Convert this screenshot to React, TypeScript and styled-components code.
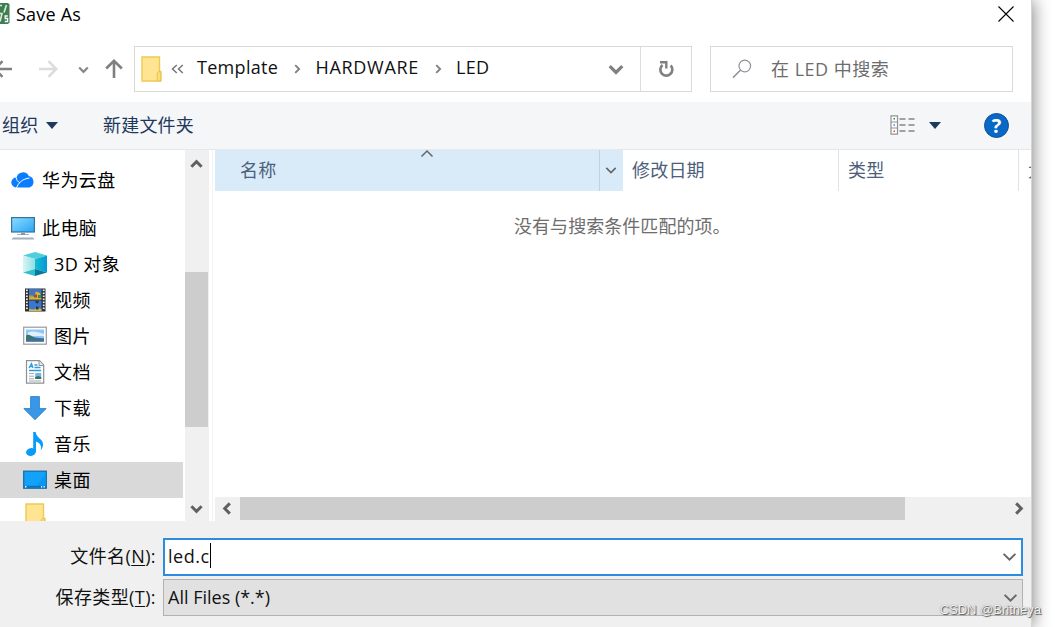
import React from "react";
import styled, { createGlobalStyle, css } from "styled-components";

type Direction = "up" | "down" | "left" | "right";

const rotation: Record<Direction, number> = { down: 0, left: 90, up: 180, right: 270 };

interface ChevronProps {
  dir?: Direction;
  size?: number;
  color?: string;
  weight?: number;
}

function Chevron({ dir = "down", size = 14, color = "#666", weight = 2 }: ChevronProps) {
  return (
    <svg width={size} height={size} viewBox="0 0 14 14">
      <path
        d="M1.5 4.5 7 10l5.5-5.5"
        fill="none"
        stroke={color}
        strokeWidth={weight}
        transform={`rotate(${rotation[dir]} 7 7)`}
      />
    </svg>
  );
}

function FolderIcon() {
  return (
    <svg width="21" height="26" viewBox="0 0 21 26">
      <path d="M1 1h17.5v14.5h1.3V25H1z" fill="#ffe491" stroke="#edc956" strokeWidth="1.4" />
      <path d="M16.2 24.5v-7.3l1.2-1.5h2.4V25h-3.6z" fill="#fbdc78" stroke="#e9c14a" strokeWidth="1" />
    </svg>
  );
}

function CloudIcon() {
  return (
    <svg width="24" height="24" viewBox="0 0 24 24">
      <path
        d="M5.5 19.5A5 5 0 0 1 2 10.8 5 5 0 0 1 5.6 9.5 6.5 6.5 0 0 1 17.8 8 6 6 0 0 1 18.5 19.5z"
        fill="#0a7cff"
      />
      <path d="M5.2 9.5c.2 2.500 1.500 4.300 3.600 5.200M5.500 20c2-5.500 6-9 13-10" fill="none" stroke="#fff" strokeWidth="1" />
    </svg>
  );
}

function ComputerIcon() {
  return (
    <svg width="24" height="24" viewBox="0 0 24 24">
      <defs>
        <linearGradient id="screen" x1="0" y1="0" x2="1" y2="1">
          <stop offset="0" stopColor="#8fdcff" />
          <stop offset="1" stopColor="#27a4f5" />
        </linearGradient>
      </defs>
      <rect x=".6" y="1.6" width="22.8" height="14.4" fill="url(#screen)" stroke="#35749f" strokeWidth="1.2" />
      <path d="M10 17h4v1.2h4V19H6v-.8h4z" fill="#8399ab" />
      <path d="M2 21.5h20l1.5 2H.5z" fill="#9fb0c0" />
    </svg>
  );
}

function CubeIcon() {
  return (
    <svg width="24" height="24" viewBox="0 0 24 24">
      <defs>
        <linearGradient id="cubeLeft" x1="0" y1="0" x2="1" y2="0">
          <stop offset="0" stopColor="#d8f6f4" />
          <stop offset="1" stopColor="#8fe0e4" />
        </linearGradient>
        <linearGradient id="cubeRight" x1="0" y1="0" x2="1" y2="0">
          <stop offset="0" stopColor="#19bcd4" />
          <stop offset="1" stopColor="#0598d6" />
        </linearGradient>
      </defs>
      <path d="M0 3.5 12 0l12 3.5-12 3.5z" fill="#4fcfdd" />
      <path d="M0 3.5 12 7v10L0 20.5z" fill="url(#cubeLeft)" />
      <path d="M24 3.5 12 7v10l12 3.5z" fill="url(#cubeRight)" />
      <path d="M0 20.5 12 17v7z" fill="#2cc0cd" />
      <path d="M12 17l12 3.5L12 24z" fill="#087a97" />
    </svg>
  );
}

function VideoIcon() {
  const holes = [1, 4, 7, 10, 13, 16, 19];
  return (
    <svg width="24" height="24" viewBox="0 0 24 24">
      <rect x="2" y=".5" width="20.5" height="23" fill="#2d2f33" />
      <rect x="6" y="1" width="12.5" height="10.5" fill="#3f73c7" />
      <rect x="6" y="12.5" width="12.5" height="10.5" fill="#3977d0" />
      <path d="M6 9.5l5-1 2-5 4 1.5 1.5 6.5H6z" fill="#d9b72d" />
      <path d="M6 7.5h4v2H6z" fill="#c0a03a" />
      <path d="M11 6.5h3v3h-3z" fill="#a64538" />
      <path d="M15 7h3v3h-3z" fill="#438b42" />
      <path d="M6 21l5 .5 3-1.5 4.5 1V23H6z" fill="#d1bc3d" />
      <path d="M12 13h4l-1 2.5-2-.5zM13 18.5h2.5v3H13z" fill="#3b3135" />
      {holes.map((y) => (
        <g key={y} fill="#ededed">
          <rect x="3" y={y + 0.5} width="1.8" height="1.6" />
          <rect x="19.8" y={y + 0.5} width="1.8" height="1.6" />
        </g>
      ))}
    </svg>
  );
}

function ImageIcon() {
  return (
    <svg width="24" height="24" viewBox="0 0 24 24">
      <rect x=".7" y="3.2" width="22.6" height="17" fill="#fff" stroke="#969ba0" strokeWidth="1.2" />
      <path d="M3 5.5h18v12H3z" fill="#8cc7f7" />
      <path d="M5 8.5c4-2 9-1 16 1.5v2H5z" fill="#dff0fb" />
      <path d="M3 11.5c3-2 5 1 9 2l9 1v3H3z" fill="#39776b" />
      <path d="M3 15.5c6-1.5 11-1 18-.8v2.8H3z" fill="#426e9b" />
    </svg>
  );
}

function DocumentIcon() {
  return (
    <svg width="24" height="24" viewBox="0 0 24 24">
      <path d="M3.5.7h13L20.7 5v18.2H3.5z" fill="#fff" stroke="#8d9195" strokeWidth="1.2" />
      <path d="M16 .8V5.5h4.7" fill="#e4e7e9" stroke="#8d9195" />
      <path d="M6 8 8.5 3.5 10 8M7 6.5h3M11.5 5h3M11.5 7.5h6M6 10.5h12" stroke="#2d9bd8" strokeWidth="1.3" fill="none" />
      <path d="M6 13.5h5M6 16.2h5M6 18.8h5M6 21h12" stroke="#a3a9ad" strokeWidth="1" />
      <path d="M12.2 13h6v6h-6z" fill="#76b7e9" />
      <path d="M12.2 17l3-1 3 1v2h-6z" fill="#317855" />
    </svg>
  );
}

function DownloadIcon() {
  return (
    <svg width="24" height="24" viewBox="0 0 24 24">
      <path d="M7.6.6h8.8v12h6.8L12 23.7.8 12.6h6.8z" fill="#3997e7" stroke="#2e83cc" strokeWidth=".9" />
    </svg>
  );
}

function MusicIcon() {
  return (
    <svg width="24" height="24" viewBox="0 0 24 24">
      <ellipse cx="8" cy="20" rx="5" ry="3.8" fill="#079bfa" transform="rotate(-15 8 20)" />
      <path
        d="M10.2 0h2.5c.5 4 3 5.2 5.5 8 3 3.5 2 7-.5 10.5 1-4.5-.2-7.5-4.7-9V20h-2.8z"
        fill="#079bfa"
      />
    </svg>
  );
}

function DesktopIcon() {
  return (
    <svg width="24" height="24" viewBox="0 0 24 24">
      <rect x=".7" y="3.2" width="22.6" height="17" fill="#12a1fb" stroke="#176fa8" strokeWidth="1.3" />
      <path d="M13 19 22.5 6v13z" fill="#0798f5" />
      <path d="M1.3 17.8h21.4v1.8H1.3z" fill="#0d73b6" />
      <path d="M2 18.8h1.4M18 18.8h1.2M20.5 18.8h1.2" stroke="#fff" strokeWidth="1.4" />
    </svg>
  );
}

function ArrowIcon({ dir, color }: { dir: Direction; color: string }) {
  // base glyph points left
  const angle = { left: 0, up: 90, right: 180, down: 270 }[dir];
  return (
    <svg width="20" height="20" viewBox="0 0 20 20">
      <path
        d="M19 10H2M9.5 2.2 1.8 10l7.7 7.8"
        fill="none"
        stroke={color}
        strokeWidth="2.6"
        transform={`rotate(${angle} 10 10)`}
      />
    </svg>
  );
}

const places = [
  { name: "华为云盘", level: 0, icon: <CloudIcon /> },
  { name: "此电脑", level: 0, icon: <ComputerIcon /> },
  { name: "3D 对象", level: 1, icon: <CubeIcon /> },
  { name: "视频", level: 1, icon: <VideoIcon /> },
  { name: "图片", level: 1, icon: <ImageIcon /> },
  { name: "文档", level: 1, icon: <DocumentIcon /> },
  { name: "下载", level: 1, icon: <DownloadIcon /> },
  { name: "音乐", level: 1, icon: <MusicIcon /> },
  { name: "桌面", level: 1, icon: <DesktopIcon />, selected: true },
  { name: "", level: 1, icon: <FolderIcon /> },
];

function App() {
  return (
    <Screen>
      <GlobalStyle />
      <Dialog>
        <TitleBar>
          <svg width="10" height="22" viewBox="0 0 10 22">
            <path d="M0 0h8l1.5 1.5v18L8 21H0z" fill="#3f7e50" />
            <path d="M0 2.5h2M6.5 2 4 9.5M0 10.5h2l-2 8" stroke="#dcebdc" strokeWidth="1.6" fill="none" />
            <path d="M7.8 13H5.2v2.5h2.4v3H4.8" stroke="#fff" strokeWidth="1.3" fill="none" />
          </svg>
          <Title>Save As</Title>
          <svg width="16" height="16" viewBox="0 0 16 16">
            <path d="M.5.5l15 15M15.5.5l-15 15" stroke="#000" strokeWidth="1.1" />
          </svg>
        </TitleBar>

        <NavRow>
          <NavButtons>
            <ArrowIcon dir="left" color="#808080" />
            <ArrowIcon dir="right" color="#dcdcdc" />
            <Chevron size={11} color="#888" weight={2.8} />
            <ArrowIcon dir="up" color="#808080" />
          </NavButtons>
          <AddressBar>
            <FolderIcon />
            <BackCrumbs width="13" height="10" viewBox="0 0 13 10">
              <path d="M5.8 1 1.5 5l4.3 4M11.8 1 7.5 5l4.3 4" fill="none" stroke="#777" strokeWidth="1.5" />
            </BackCrumbs>
            <Crumb $width={82} $spacing={0.3}>Template</Crumb>
            <CrumbGap><Chevron dir="right" size={10} color="#808080" weight={2.6} /></CrumbGap>
            <Crumb $width={104} $spacing={0.7}>HARDWARE</Crumb>
            <CrumbGap><Chevron dir="right" size={10} color="#808080" weight={2.6} /></CrumbGap>
            <Crumb $width={35} $spacing={0.3}>LED</Crumb>
            <AddressArrow><Chevron size={16} color="#808080" weight={2.8} /></AddressArrow>
            <RefreshButton>
              <svg width="16" height="18" viewBox="0 0 16 18">
                <path d="M12.7 5.5A6 6 0 1 1 4.5 5" fill="none" stroke="#808080" strokeWidth="2.6" />
                <path d="M2 2.2h6.3v6.3" fill="none" stroke="#808080" strokeWidth="2.4" />
              </svg>
            </RefreshButton>
          </AddressBar>
          <SearchBox>
            <svg width="20" height="20" viewBox="0 0 20 20">
              <circle cx="12.8" cy="7" r="5.8" fill="none" stroke="#94909a" strokeWidth="1.2" />
              <path d="M8.6 11 1 18.6" stroke="#94909a" strokeWidth="1.5" />
            </svg>
            <SearchHint>在 LED 中搜索</SearchHint>
          </SearchBox>
        </NavRow>

        <Toolbar>
          <ToolLabel>组织</ToolLabel>
          <Triangle />
          <NewFolder>新建文件夹</NewFolder>
          <ViewIcon width="26" height="20" viewBox="0 0 26 20">
            <path d="M1 .8h6.5v18.4H1zM1 7h6.5M1 13h6.5" fill="#fff" stroke="#929292" strokeWidth="1.2" />
            <path d="M3.5 3.8H5" stroke="#388050" strokeWidth="1.5" />
            <path d="M3.5 10H5" stroke="#398be8" strokeWidth="1.5" />
            <path d="M3.5 16.2H5" stroke="#d44" strokeWidth="1.5" />
            <path d="M9.5 4h6M18.5 4h6M9.5 10h6M18.5 10h6M9.5 16h6M18.5 16h6" stroke="#858585" strokeWidth="1.4" />
          </ViewIcon>
          <Triangle $gap={13} />
          <HelpButton>?</HelpButton>
        </Toolbar>

        <Main>
          <Sidebar>
            {places.map((place, i) => (
              <Place key={i} $level={place.level} $selected={place.selected}>
                <PlaceIcon>{place.icon}</PlaceIcon>
                {place.name}
              </Place>
            ))}
          </Sidebar>
          <VerticalScroll>
            <Chevron dir="up" size={13} color="#606060" weight={3.2} />
            <VerticalThumb />
            <Chevron size={13} color="#606060" weight={3.2} />
          </VerticalScroll>
          <Splitter />
          <FileList>
            <Columns>
              <NameColumn>
                名称
                <SortMark><Chevron dir="up" size={14} weight={1.5} /></SortMark>
              </NameColumn>
              <FilterButton><Chevron size={12} weight={1.9} /></FilterButton>
              <Column $width={216}>修改日期</Column>
              <Column $width={180}>类型</Column>
              <Column $width={12} $last>大小</Column>
            </Columns>
            <EmptyText>没有与搜索条件匹配的项。</EmptyText>
            <HorizontalScroll>
              <Chevron dir="left" size={13} color="#606060" weight={3.2} />
              <HorizontalThumb />
              <Chevron dir="right" size={13} color="#606060" weight={3.2} />
            </HorizontalScroll>
          </FileList>
        </Main>

        <Footer>
          <FieldRow>
            <FieldLabel>文件名(<u>N</u>):</FieldLabel>
            <Field $active>
              <FieldValue $spacing={0.5}>led.c</FieldValue>
              <Caret />
              <FieldArrow><Chevron size={15} weight={1.8} /></FieldArrow>
            </Field>
          </FieldRow>
          <FieldRow>
            <FieldLabel>保存类型(<u>T</u>):</FieldLabel>
            <Field>
              <FieldValue $spacing={0}>All Files (*.*)</FieldValue>
              <FieldArrow><Chevron size={15} weight={1.8} /></FieldArrow>
            </Field>
          </FieldRow>
        </Footer>
      </Dialog>
      <Watermark>CSDN @Britneya</Watermark>
    </Screen>
  );
}

const GlobalStyle = createGlobalStyle`
  * {
    box-sizing: border-box;
  }
  body {
    margin: 0;
    overflow: hidden;
  }
  svg {
    display: block;
    flex-shrink: 0;
  }
`;

const Screen = styled.div`
  position: relative;
  width: 1055px;
  height: 627px;
  overflow: hidden;
  background: #fff;
  color: #111;
  font-family: "Open Sans", "Noto Sans CJK SC", sans-serif;
  font-size: 18px;
  line-height: 24px;
  letter-spacing: 0.2px;
  white-space: nowrap;
`;

const Dialog = styled.div`
  display: flex;
  flex-direction: column;
  width: 1032px;
  height: 627px;
  background: #fff;
  border-right: 1px solid #d5d5d5;
  box-shadow: 2px 0 16px rgba(0, 0, 0, 0.45);
`;

// title bar
const TitleBar = styled.div`
  display: flex;
  align-items: center;
  height: 28px;
  padding-right: 17px;
`;

const Title = styled.div`
  flex: 1;
  margin-left: 6px;
  color: #000;
`;

// navigation
const NavRow = styled.div`
  display: flex;
  height: 46px;
  margin-top: 18px;
`;

const NavButtons = styled.div`
  display: flex;
  align-items: center;
  width: 134px;
  margin-left: -7px;
  margin-right: 7px;

  svg:nth-child(2) {
    margin-left: 25px;
  }
  svg:nth-child(3) {
    margin-left: 20px;
  }
  svg:nth-child(4) {
    margin-left: 15px;
  }
`;

const AddressBar = styled.div`
  display: flex;
  align-items: center;
  width: 558px;
  padding-left: 6px;
  border: 1px solid #d9d9d9;
`;

const BackCrumbs = styled.svg`
  margin-left: 9px;
  margin-right: 13px;
`;

const Crumb = styled.span<{ $width: number; $spacing: number }>`
  width: ${(p) => p.$width}px;
  padding-bottom: 4px;
  letter-spacing: ${(p) => p.$spacing}px;
`;

const CrumbGap = styled.span`
  display: flex;
  justify-content: center;
  width: 36.5px;
`;

const AddressArrow = styled.span`
  margin-left: auto;
  margin-right: 16px;
`;

const RefreshButton = styled.div`
  display: flex;
  align-items: center;
  justify-content: center;
  align-self: stretch;
  width: 51px;
  border-left: 1px solid #dcdcdc;
`;

const SearchBox = styled.div`
  display: flex;
  align-items: center;
  gap: 19px;
  width: 303px;
  margin-left: 18px;
  padding-left: 21px;
  border: 1px solid #d9d9d9;
  color: #6d6d6d;
`;

const SearchHint = styled.span`
  letter-spacing: 0.5px;
`;

// toolbar
const Toolbar = styled.div`
  display: flex;
  align-items: center;
  height: 48px;
  margin-top: 10px;
  padding: 0 22px 1px 2px;
  background: #f5f6f8;
  border-bottom: 1px solid #e6e7e9;
  color: #1e395b;
`;

const ToolLabel = styled.span`
  width: 36px;
`;

const Triangle = styled.span<{ $gap?: number }>`
  margin-left: ${(p) => p.$gap ?? 8}px;
  border: 6px solid transparent;
  border-top: 7px solid #1e395b;
  border-bottom: 0;
`;

const NewFolder = styled.span`
  margin-left: 45px;
  margin-right: auto;
`;

const ViewIcon = styled.svg`
  margin-bottom: 1px;
`;

const HelpButton = styled.div`
  width: 25px;
  height: 25px;
  margin-left: 43px;
  border: 1px solid #145291;
  border-radius: 50%;
  background: #0768c8;
  color: #fff;
  font-size: 20px;
  font-weight: bold;
  line-height: 23px;
  text-align: center;
`;

// places
const Main = styled.div`
  display: flex;
  height: 371px;
`;

const Sidebar = styled.div`
  width: 185px;
  height: 371px;
  overflow: hidden;
`;

const Place = styled.div<{ $level: number; $selected?: boolean }>`
  display: flex;
  align-items: center;
  width: 183px;
  height: 36px;
  padding-left: ${(p) => (p.$level ? 23 : 11)}px;
  color: #000;
  letter-spacing: 0.4px;
  ${(p) => !p.$level && css`
    margin-top: 12px;
  `}
  ${(p) => p.$selected && css`
    background: #d9d9d9;
  `}
`;

const PlaceIcon = styled.span`
  display: flex;
  justify-content: center;
  width: 24px;
  margin-right: 7px;
`;

const VerticalScroll = styled.div`
  display: flex;
  flex-direction: column;
  align-items: center;
  justify-content: space-between;
  width: 24px;
  padding: 8px 1px 6px 0;
  background: #f0f0f0;
`;

const VerticalThumb = styled.div`
  width: 23px;
  height: 155px;
  margin-bottom: -26px;
  background: #cdcdcd;
`;

const Splitter = styled.div`
  width: 6px;
  border-left: 3px solid #fff;
  background: linear-gradient(to right, #f3f3f3 1px, #fff 1px);
`;

// file list
const FileList = styled.div`
  display: flex;
  flex-direction: column;
  flex: 1;
  min-width: 0;
`;

const Columns = styled.div`
  display: flex;
  height: 41px;
  color: #4c607a;
  line-height: 41px;
`;

const NameColumn = styled.div`
  position: relative;
  width: 384px;
  padding-left: 25px;
  background: #d9ebf9;
`;

const SortMark = styled.span`
  position: absolute;
  top: -3px;
  left: 205px;
`;

const FilterButton = styled.div`
  display: flex;
  align-items: center;
  justify-content: center;
  width: 24px;
  padding: 0 2px 2px 0;
  border-left: 1px solid #bdd3e3;
  background: #d9ebf9;
`;

const Column = styled.div<{ $width: number; $last?: boolean }>`
  width: ${(p) => p.$width}px;
  padding-left: 9px;
  overflow: hidden;
  border-right: ${(p) => (p.$last ? 0 : "1px solid #e2e2e2")};
`;

const EmptyText = styled.div`
  flex: 1;
  padding-top: 23px;
  padding-left: 299px;
  color: #6d6d6d;
  letter-spacing: 0.05px;
`;

const HorizontalScroll = styled.div`
  display: flex;
  align-items: center;
  height: 24px;
  padding: 0 6px 1px;
  background: #f0f0f0;
`;

const HorizontalThumb = styled.div`
  width: 665px;
  height: 23px;
  margin-left: 6px;
  margin-right: auto;
  background: #cdcdcd;
`;

// footer
const Footer = styled.div`
  display: flex;
  flex: 1;
  flex-direction: column;
  gap: 3px;
  padding: 17px 8px 0 0;
  background: #f0f0f0;
`;

const FieldRow = styled.div`
  display: flex;
  align-items: center;
  height: 38px;
`;

const FieldLabel = styled.div`
  width: 163px;
  padding-right: 7px;
  padding-bottom: 2px;
  letter-spacing: 0.4px;
  text-align: right;

  u {
    text-underline-offset: 2px;
  }
`;

const Field = styled.div<{ $active?: boolean }>`
  display: flex;
  align-items: center;
  flex: 1;
  height: ${(p) => (p.$active ? 38 : 37)}px;
  margin-bottom: 1px;
  padding-left: ${(p) => (p.$active ? 3 : 4)}px;
  border: ${(p) => (p.$active ? "2px solid #2c8de0" : "1px solid #b2b2b2")};
  background: ${(p) => (p.$active ? "#fff" : "#e1e1e1")};
`;

const FieldValue = styled.span<{ $spacing: number }>`
  padding-bottom: 2px;
  color: #111;
  letter-spacing: ${(p) => p.$spacing}px;
`;

const Caret = styled.span`
  width: 1px;
  height: 25px;
  margin-bottom: 2px;
  background: #000;
`;

const FieldArrow = styled.span`
  margin-left: auto;
  margin-right: 4px;
`;

const Watermark = styled.div`
  position: absolute;
  right: 14px;
  bottom: 9px;
  color: #f4f4f4;
  font-family: "Liberation Sans", sans-serif;
  font-size: 13px;
  line-height: 16px;
  letter-spacing: 0;
  text-shadow: 1px 1px 1px #555, 0 0 1px #777;
`;

export default App;
